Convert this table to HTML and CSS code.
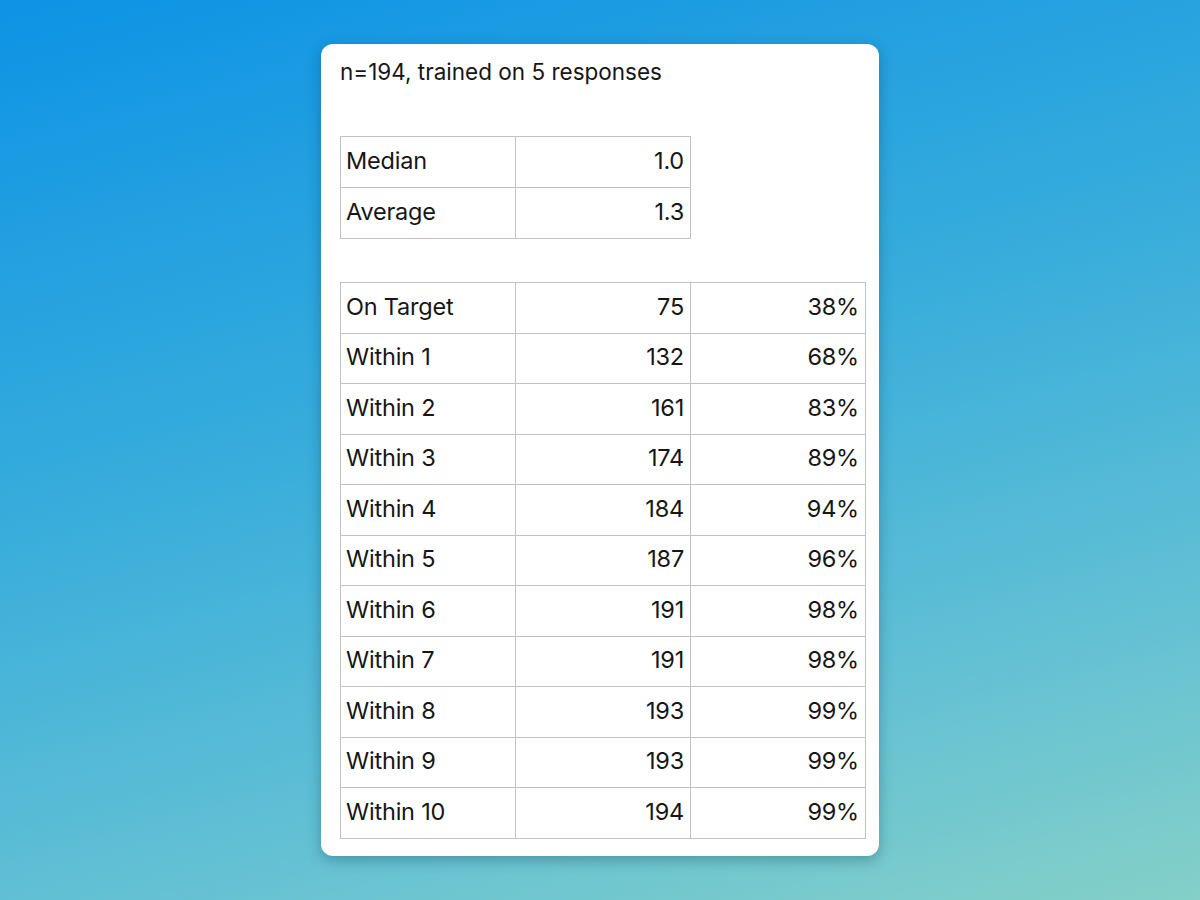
FILE: index.html
```html
<!DOCTYPE html>
<html>
<head>
<meta charset="utf-8">
<link rel="stylesheet" href="styles.css">
</head>
<body>
<div class="card">
  <p class="title">n=194, trained on 5 responses</p>
  <table class="stats summary">
    <tr><td>Median</td><td class="num">1.0</td></tr>
    <tr><td>Average</td><td class="num">1.3</td></tr>
  </table>
  <table class="stats dist">
    <tr><td>On Target</td><td class="num">75</td><td class="num">38%</td></tr>
    <tr><td>Within 1</td><td class="num">132</td><td class="num">68%</td></tr>
    <tr><td>Within 2</td><td class="num">161</td><td class="num">83%</td></tr>
    <tr><td>Within 3</td><td class="num">174</td><td class="num">89%</td></tr>
    <tr><td>Within 4</td><td class="num">184</td><td class="num">94%</td></tr>
    <tr><td>Within 5</td><td class="num">187</td><td class="num">96%</td></tr>
    <tr><td>Within 6</td><td class="num">191</td><td class="num">98%</td></tr>
    <tr><td>Within 7</td><td class="num">191</td><td class="num">98%</td></tr>
    <tr><td>Within 8</td><td class="num">193</td><td class="num">99%</td></tr>
    <tr><td>Within 9</td><td class="num">193</td><td class="num">99%</td></tr>
    <tr><td>Within 10</td><td class="num">194</td><td class="num">99%</td></tr>
  </table>
</div>
</body>
</html>
```
FILE: styles.css
```css
html, body {
  margin: 0;
  height: 100%;
}
body {
  width: 1200px;
  height: 900px;
  background: linear-gradient(165deg, #0d93e5 0%, #3aaedb 45%, #62c0d4 75%, #84d0c8 100%);
  font-family: Inter, "Noto Sans", sans-serif;
  color: #161616;
  display: flex;
  justify-content: center;
  align-items: flex-start;
  padding-top: 44px;
  box-sizing: border-box;
}
.card {
  width: 558px;
  height: 812px;
  box-sizing: border-box;
  background: #fff;
  border-radius: 12px;
  box-shadow: 0 4px 14px rgba(10, 60, 80, 0.35);
  padding: 14px 15px 18px 19px;
  display: flex;
  flex-direction: column;
  align-items: flex-start;
}
.title {
  margin: 0;
  font-size: 22.5px;
  line-height: 28px;
}
.stats {
  border-collapse: collapse;
  table-layout: fixed;
  font-size: 23.5px;
  letter-spacing: -0.2px;
}
.stats td {
  border: 1px solid #c2c2c2;
  width: 175px;
  height: 50px;
  box-sizing: border-box;
  padding: 0 6px 3px 5px;
  vertical-align: middle;
}
.stats td.num {
  text-align: right;
}
.summary {
  width: 350px;
  margin-top: 50px;
}
.summary td {
  height: 51px;
}
.dist {
  width: 524px;
  margin-top: 43px;
}
.dist td {
  height: 50.5px;
}
```
